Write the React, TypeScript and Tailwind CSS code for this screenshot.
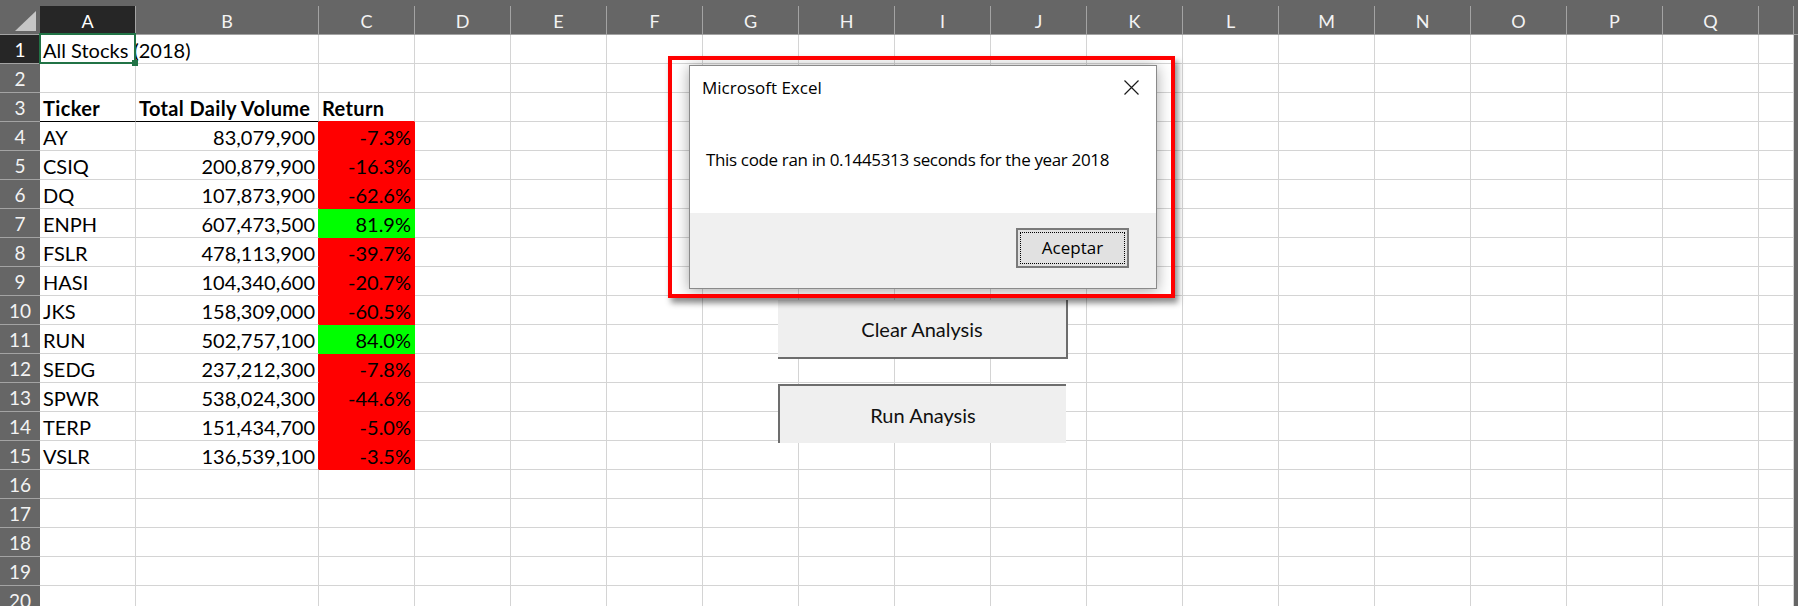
import React from "react";

type Stock = { ticker: string; volume: string; ret: string; up: boolean };

const stocks: Stock[] = [
  { ticker: "AY", volume: "83,079,900", ret: "-7.3%", up: false },
  { ticker: "CSIQ", volume: "200,879,900", ret: "-16.3%", up: false },
  { ticker: "DQ", volume: "107,873,900", ret: "-62.6%", up: false },
  { ticker: "ENPH", volume: "607,473,500", ret: "81.9%", up: true },
  { ticker: "FSLR", volume: "478,113,900", ret: "-39.7%", up: false },
  { ticker: "HASI", volume: "104,340,600", ret: "-20.7%", up: false },
  { ticker: "JKS", volume: "158,309,000", ret: "-60.5%", up: false },
  { ticker: "RUN", volume: "502,757,100", ret: "84.0%", up: true },
  { ticker: "SEDG", volume: "237,212,300", ret: "-7.8%", up: false },
  { ticker: "SPWR", volume: "538,024,300", ret: "-44.6%", up: false },
  { ticker: "TERP", volume: "151,434,700", ret: "-5.0%", up: false },
  { ticker: "VSLR", volume: "136,539,100", ret: "-3.5%", up: false },
];

const letters = ["A", "B", "C", "D", "E", "F", "G", "H", "I", "J", "K", "L", "M", "N", "O", "P", "Q", ""];

const widths = [
  "w-[96px]", "w-[183px]", "w-[96px]",
  "w-[96px]", "w-[96px]", "w-[96px]", "w-[96px]", "w-[96px]", "w-[96px]", "w-[96px]",
  "w-[96px]", "w-[96px]", "w-[96px]", "w-[96px]", "w-[96px]", "w-[96px]", "w-[96px]",
  "w-[35px]",
];

const rows = Array.from({ length: 20 }, (_, i) => i + 1);

function fillOf(row: number) {
  const s = stocks[row - 4];
  if (!s) return "";
  return s.up ? "green" : "red";
}

function Cell({ row, col }: { row: number; col: number }) {
  const fill = fillOf(row);
  let br = "border-r-[#d4d4d4]";
  let bb = "border-b-[#d4d4d4]";
  let bg = "";
  let text: React.ReactNode = null;
  let align = "justify-start pl-[3px]";
  let weight = "font-normal";

  if (row === 1 && col === 0) text = "All Stocks (2018)";
  if (row === 3) {
    weight = "font-bold tracking-[0.35px]";
    if (col === 0) text = "Ticker";
    if (col === 1) text = "Total Daily Volume";
    if (col === 2) text = "Return";
    if (col < 2) bb = "border-b-[#000000]";
    if (col === 2) bb = "border-b-[#ff0000]";
  }
  if (fill) {
    const s = stocks[row - 4];
    if (col === 0) text = s.ticker;
    if (col === 1) {
      text = s.volume;
      align = "justify-end pr-[3px]";
      br = fill === "green" ? "border-r-[#00ff00]" : "border-r-[#ff0000]";
    }
    if (col === 2) {
      text = s.ret;
      align = "justify-end pr-[3px]";
      bg = fill === "green" ? "bg-[#00ff00]" : "bg-[#ff0000]";
      br = fill === "green" ? "border-r-[#00ff00]" : "border-r-[#ff0000]";
      bb = fill === "green" ? "border-b-[#00ff00]" : "border-b-[#ff0000]";
    }
  }

  return (
    <div className={`${widths[col]} h-full shrink-0 border-r border-b ${br} ${bb} ${bg} flex items-center pt-[2px] whitespace-nowrap ${align} ${weight}`}>
      {text}
    </div>
  );
}

function App() {
  return (
    <div className="relative w-[1798px] h-[606px] overflow-hidden bg-white font-['Lato',sans-serif] text-[20px] text-black">
      {/* column headers */}
      <div className="flex items-end h-[35px] bg-[#666666] border-b border-[#a3a3a3]">
        <div className="w-[40px] h-full shrink-0 pt-[11px] pl-[15px]">
          <svg width="21" height="20" viewBox="0 0 21 20">
            <polygon points="21,0 21,20 0,20" fill="#c6c6c6" />
          </svg>
        </div>
        {letters.map((l, i) => (
          <div
            key={i}
            className={`${widths[i]} h-[28px] shrink-0 flex items-center justify-center pt-[3px] text-[18px] border-r border-[#a3a3a3] ${i === 0 ? "bg-[#262626] text-white" : "text-[#f3f3f3]"}`}
          >
            {l}
          </div>
        ))}
      </div>

      {/* body */}
      <div className="flex">
        <div className="flex flex-col">
          {rows.map((r) => (
            <div key={r} className="flex h-[29px] shrink-0">
              <div className={`w-[40px] h-full shrink-0 border-b border-[#a3a3a3] flex items-center justify-center pt-[2px] text-[19px] ${r === 1 ? "bg-[#262626] text-white" : "bg-[#666666] text-[#f3f3f3]"}`}>
                {r}
              </div>
              {letters.map((_, c) => (
                <Cell key={c} row={r} col={c} />
              ))}
            </div>
          ))}
        </div>
        <div className="w-[4px] bg-[#666666] self-stretch" />
      </div>

      {/* selected cell A1 */}
      <div className="absolute left-[39px] top-[33px] w-[97px] h-[31px] border-2 border-[#217346]" />
      <div className="absolute left-[132px] top-[60px] w-[6px] h-[6px] bg-[#217346]" />

      {/* sheet buttons */}
      <div className="absolute left-[778px] top-[300px] w-[290px] h-[59px] bg-[#efefef] border-r-2 border-b-2 border-[#6d6d6d] flex items-center justify-center text-[#111]">
        Clear Analysis
      </div>
      <div className="absolute left-[778px] top-[384px] w-[288px] h-[59px] bg-[#efefef] border-t-2 border-l-2 border-[#6d6d6d] flex items-center justify-center text-[#111]">
        Run Anaysis
      </div>

      {/* message box */}
      <div className="absolute left-[689px] top-[65px] w-[468px] h-[224px] border border-[#8a8a8a] bg-white flex flex-col shadow-[0_2px_14px_rgba(0,0,0,0.35)] font-['Open_Sans',sans-serif] text-[17px] text-black">
        <div className="h-[147px] shrink-0 flex flex-col">
          <div className="flex justify-between items-start pl-[12px] pr-[17px] pt-[10px]">
            <span className="leading-[24px]">Microsoft Excel</span>
            <svg className="mt-[4px]" width="15" height="15" viewBox="0 0 15 15">
              <path d="M0.5 0.5 L14.5 14.5 M14.5 0.5 L0.5 14.5" stroke="#1a1a1a" strokeWidth="1.2" fill="none" />
            </svg>
          </div>
          <p className="pl-[16px] mt-[48px] leading-[24px] tracking-[-0.35px]">This code ran in 0.1445313 seconds for the year 2018</p>
        </div>
        <div className="flex-1 bg-[#f0f0f0] flex justify-end items-start pt-[15px] pr-[27px]">
          <button className="w-[113px] h-[40px] border-2 border-[#7a7a7a] bg-[#e1e1e1] p-[2px]">
            <div className="h-full border border-dotted border-black flex items-center justify-center">Aceptar</div>
          </button>
        </div>
      </div>

      {/* red highlight frame */}
      <div className="absolute left-[668px] top-[56px] w-[507px] h-[242px] border-4 border-[#ff0000] shadow-[3px_5px_6px_rgba(0,0,0,0.45)]" />
    </div>
  );
}

export default App;
